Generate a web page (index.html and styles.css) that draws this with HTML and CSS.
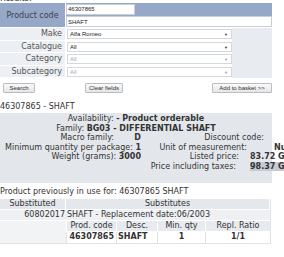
FILE: index.html
```html
<!DOCTYPE html>
<html lang="en">
<head>
    <meta charset="UTF-8">
    <meta name="viewport" content="width=device-width, initial-scale=1.0">
    <title>Product search</title>
    <link rel="stylesheet" href="styles.css">
</head>
<body>
    <div class="page">
        <div class="results">Results:</div>

        <div class="search-form">
            <div class="label code-label">Product code</div>
            <div class="code-row">
                <input class="field code-input" type="text" value="46307865">
                <span class="code-bar"></span>
            </div>
            <div class="desc-row">
                <input class="field desc-input" type="text" value="SHAFT">
            </div>

            <div class="label">Make</div>
            <div class="select-cell"><div class="select">Alfa Romeo<span class="arrow">&#9660;</span></div></div>
            <div class="side-fill"></div>

            <div class="label">Catalogue</div>
            <div class="select-cell"><div class="select">All<span class="arrow">&#9660;</span></div></div>

            <div class="label">Category</div>
            <div class="select-cell"><div class="select disabled">All<span class="arrow">&#9660;</span></div></div>

            <div class="label">Subcategory</div>
            <div class="select-cell"><div class="select disabled">All<span class="arrow">&#9660;</span></div></div>
        </div>

        <div class="actions">
            <button class="btn btn-search">Search</button>
            <button class="btn btn-clear">Clear fields</button>
            <button class="btn btn-basket">Add to basket &gt;&gt;</button>
        </div>

        <div class="product-title">46307865 - SHAFT</div>

        <div class="info">
            <div class="info-line">Availability: <b>- Product orderable</b></div>
            <div class="info-line">Family: <b>BG03 - DIFFERENTIAL SHAFT</b></div>
            <div class="info-grid">
                <div class="info-left">Macro family: &nbsp;&nbsp;&nbsp;&nbsp;&nbsp;&nbsp;&nbsp;<b>D</b></div>
                <div class="info-label discount">Discount code:</div>

                <div class="info-left">Minimum quantity per package: <b>1</b></div>
                <div class="info-label unit">Unit of measurement:</div>
                <div class="info-value unit-value"><b>Number</b></div>

                <div class="info-left">Weight (grams): <b>3000</b></div>
                <div class="info-label listed">Listed price:</div>
                <div class="info-value"><b>83.72 GBP</b></div>

                <div class="info-left"></div>
                <div class="info-label taxed">Price including taxes:</div>
                <div class="info-value"><b class="price-total">98.37 GBP</b></div>
            </div>
        </div>

        <div class="history-title">Product previously in use for: 46307865 SHAFT</div>

        <div class="history">
            <div class="h-head">Substituted</div>
            <div class="h-head h-wide">Substitutes</div>

            <div class="h-row h-code">60802017</div>
            <div class="h-row h-wide h-text">SHAFT - Replacement date:06/2003</div>

            <div class="h-empty"></div>
            <div class="h-sub">Prod. code</div>
            <div class="h-sub">Desc.</div>
            <div class="h-sub">Min. qty</div>
            <div class="h-sub">Repl. Ratio</div>

            <div class="h-cell h-right">46307865</div>
            <div class="h-cell h-left">SHAFT</div>
            <div class="h-cell">1</div>
            <div class="h-cell">1/1</div>
        </div>
    </div>
</body>
</html>
```

FILE: styles.css
```css
body {
    margin: 0;
    font-family: "DejaVu Sans", Verdana, sans-serif;
    font-size: 8px;
    color: #333;
    background-color: #fff;
    overflow: hidden;
}
.page {
    width: 272px;
    margin-top: -6px;
}
.results {
    height: 9px;
    line-height: 10px;
}

/* search form */
.search-form {
    display: grid;
    grid-template-columns: 66px 166px 40px;
    grid-template-rows: repeat(6, 12.5px);
}
.label {
    background-color: #eceff3;
    border-bottom: 1px solid #fff;
    border-right: 1px solid #fff;
    text-align: right;
    padding-right: 3px;
    line-height: 11px;
    color: #555;
}
.code-label {
    grid-row: 1 / 3;
    background-color: #95a8c7;
    line-height: 25px;
    text-align: center;
    padding-right: 0;
    color: #3c4150;
}
.code-row {
    grid-column: 2 / 4;
    display: flex;
    align-items: center;
    background-color: #95a8c7;
}
.desc-row {
    grid-column: 2 / 4;
    display: flex;
    align-items: center;
    background-color: #fff;
}
.field {
    box-sizing: border-box;
    height: 11px;
    margin: 0;
    padding: 0 1px;
    border: 1px solid #c9ced6;
    background-color: #fff;
    font-family: "Liberation Sans", Arial, sans-serif;
    font-size: 6px;
    color: #222;
    outline: none;
}
.code-input {
    width: 69px;
}
.desc-input {
    width: 100%;
}
.code-bar {
    flex: 1;
}
.select-cell {
    display: flex;
    align-items: center;
    padding-left: 1px;
}
.select {
    position: relative;
    box-sizing: border-box;
    width: 165px;
    height: 10px;
    line-height: 9px;
    padding-left: 2px;
    border: 1px solid #d3d7de;
    background-color: #fff;
    font-family: "Liberation Sans", Arial, sans-serif;
    font-size: 6px;
    color: #222;
}
.select.disabled {
    color: #aaa;
}
.arrow {
    position: absolute;
    right: 3px;
    top: 0;
    font-size: 4px;
    color: #333;
}
.select.disabled .arrow {
    color: #999;
}
.side-fill {
    grid-column: 3;
    grid-row: 3 / 7;
    background-color: #e8ebf0;
}

/* buttons */
.actions {
    display: grid;
    grid-template-columns: 66px 1fr auto;
    align-items: center;
    margin-top: 4px;
    height: 11px;
}
.btn {
    box-sizing: border-box;
    height: 10px;
    padding: 0;
    border: 1px solid #b9bcc1;
    border-radius: 1px;
    background: linear-gradient(#fafafa, #e6e6e6);
    font-family: "Liberation Sans", Arial, sans-serif;
    font-size: 6px;
    color: #333;
}
.btn-search {
    width: 32px;
    margin-left: 3px;
}
.btn-clear {
    width: 38px;
    margin-left: 19px;
}
.btn-basket {
    width: 60px;
}

/* product info */
.product-title {
    margin-top: 9px;
    line-height: 10px;
}
.info {
    box-sizing: border-box;
    height: 70px;
    margin-top: 1px;
    padding-top: 1px;
    background-color: #e3e7ec;
    line-height: 9.6px;
}
.info-line {
    text-align: center;
}
.info-grid {
    display: grid;
    grid-template-columns: 141px 107px minmax(0, 1fr);
}
.info-left {
    text-align: right;
    white-space: nowrap;
}
.info-label {
    text-align: right;
    white-space: nowrap;
}
.discount {
    grid-column: 2 / 4;
    padding-right: 8px;
}
.unit {
    padding-right: 1px;
}
.listed {
    padding-right: 9px;
}
.taxed {
    padding-right: 12px;
}
.info-value {
    padding-left: 2px;
    white-space: nowrap;
}
.unit-value {
    padding-left: 26px;
}
.price-total {
    background-color: #c6cbd2;
}

/* substitutions */
.history-title {
    margin-top: 4px;
    line-height: 10px;
}
.history {
    display: grid;
    grid-template-columns: 66px 50px 41px 48px 65px;
    grid-auto-rows: 11px;
    width: 270px;
    margin-top: 2px;
    border-right: 1px solid #dfe2e6;
    border-bottom: 1px solid #dfe2e6;
    line-height: 10px;
}
.h-head {
    background-color: #e4e7eb;
    border-right: 1px solid #fff;
    border-bottom: 1px solid #fff;
    text-align: center;
}
.h-wide {
    grid-column: 2 / 6;
}
.h-row {
    background-color: #eef0f3;
    border-bottom: 1px solid #fff;
}
.h-code {
    text-align: right;
    padding-right: 1px;
}
.h-text {
    padding-left: 1px;
}
.h-empty {
    grid-row: 3 / 5;
    background-color: #f1f3f5;
}
.h-sub {
    background-color: #e7eaee;
    border-left: 1px solid #fff;
    border-bottom: 1px solid #fff;
    text-align: center;
}
.h-cell {
    background-color: #fff;
    border-left: 1px solid #dfe2e6;
    font-weight: bold;
    text-align: center;
}
.h-right {
    text-align: right;
    padding-right: 2px;
}
.h-left {
    text-align: left;
    padding-left: 1px;
}
```
